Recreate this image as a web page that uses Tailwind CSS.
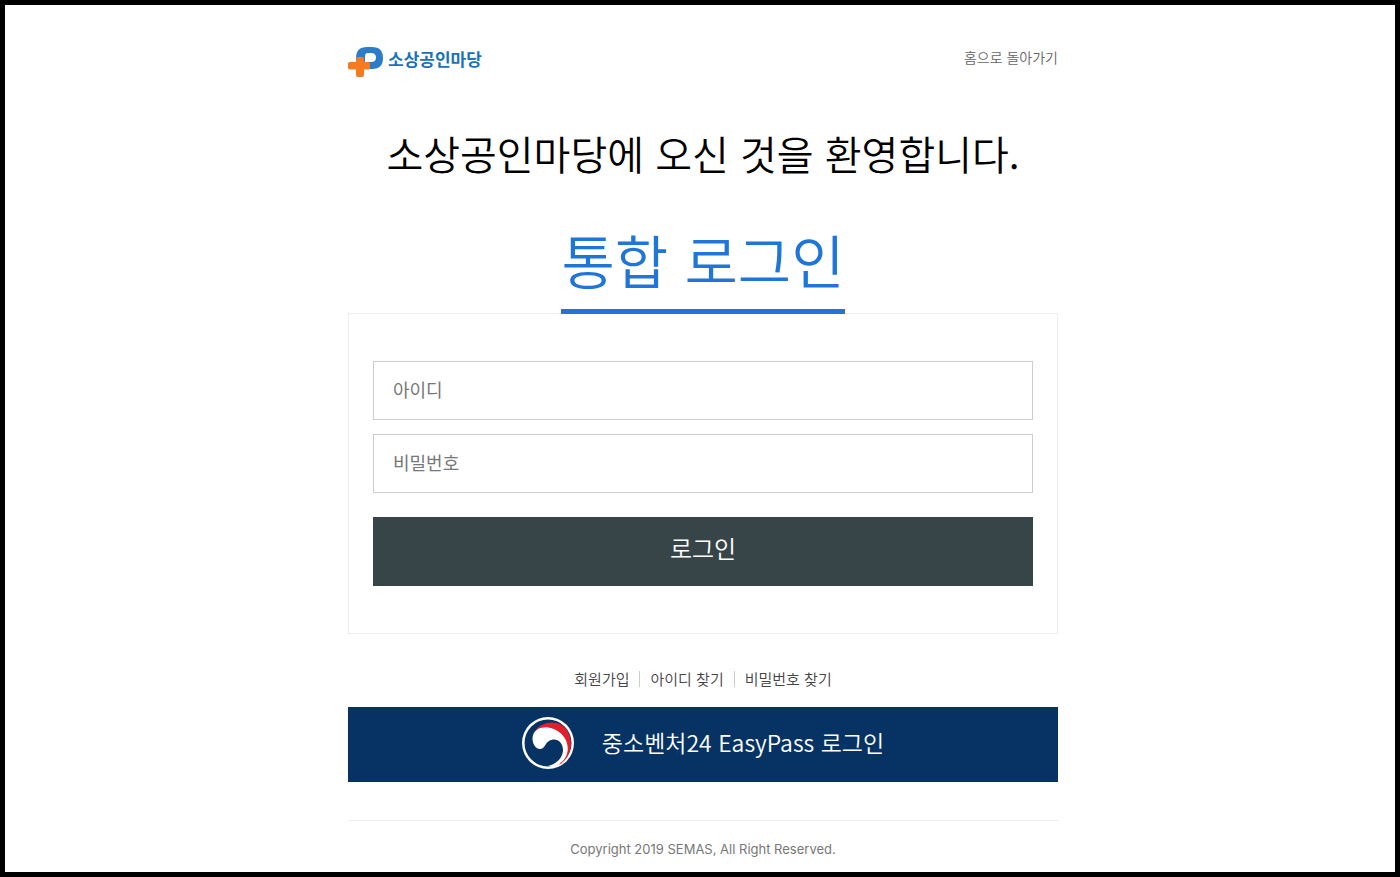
<!DOCTYPE html>
<html lang="ko">
<head>
<meta charset="utf-8">
<meta name="viewport" content="width=device-width, initial-scale=1">
<title>소상공인마당 통합 로그인</title>
<script src="https://cdn.jsdelivr.net/npm/@tailwindcss/browser@4"></script>
</head>
<body class="min-h-screen border-5 border-black bg-white pl-1.5 font-['Noto_Sans_CJK_KR',sans-serif]">
<div class="mx-auto max-w-[710px]">
  <header class="flex items-start justify-between pt-10">
    <a href="#" class="flex items-start gap-1 text-[17px] leading-5 font-bold text-[#1a72b8]">
      <svg class="mt-0.5 h-[30px] w-9" viewBox="0 0 36 30" aria-hidden="true">
        <path fill="#2d7cc9" fill-rule="evenodd" d="M8 14V11Q8 0 19 0H24Q35 0 35 11Q35 22 24 22H14V14ZM20 6Q17 6 17 9V15H23Q28 15 28 10.500T23 6Z"/>
        <path fill="#f47b20" d="M10 10H14.500Q16 10 16 11.500V15H20.500Q22 15 22 16.500V21Q22 22.500 20.500 22.500H16V28Q16 30 14 30H10Q8 30 8 28V22.500H2Q0 22.500 0 20.500V16.500Q0 15 2 15H8V11.500Q8 10 10 10Z"/>
      </svg>
      <span class="pt-1">소상공인마당</span>
    </a>
    <a href="#" class="pt-0.5 text-[14px] leading-5 font-[350] text-[#666]">홈으로 돌아가기</a>
  </header>
  <main>
    <h1 class="mt-[46px] text-center text-[40px] leading-[60px] font-[350] text-black">소상공인마당에 오신 것을 환영합니다.</h1>
    <div class="mt-8 flex justify-center">
      <h2 class="relative z-10 -mb-px border-b-5 border-[#1f76d8] pb-1.5 text-[58px] leading-[88px] font-[350] text-[#1f76d8]">통합 로그인</h2>
    </div>
    <form class="border border-[#ededed] px-6 pt-[47px] pb-[47px]">
      <input aria-label="아이디" type="text" placeholder="아이디" class="block h-[59px] w-full border border-[#ccc] px-[19px] pb-1 text-[18px] placeholder:text-[#777]">
      <input aria-label="비밀번호" type="password" placeholder="비밀번호" class="mt-3.5 block h-[59px] w-full border border-[#ccc] px-[19px] pb-1 text-[18px] placeholder:text-[#777]">
      <button type="button" class="mt-6 block h-[69px] w-full bg-[#374549] pb-2 text-[24px] font-[350] text-white">로그인</button>
    </form>
    <nav class="mt-[33px] flex items-center justify-center text-[15px] leading-6 font-[350] text-[#444]">
      <a href="#">회원가입</a>
      <span class="mx-2.5 h-4 w-px bg-[#ccc]"></span>
      <a href="#">아이디 찾기</a>
      <span class="mx-2.5 h-4 w-px bg-[#ccc]"></span>
      <a href="#">비밀번호 찾기</a>
    </nav>
    <a href="#" class="mt-4 flex h-[75px] items-center justify-center gap-7 bg-[#063363] pb-1 text-[23px] font-[350] text-white">
      <svg class="size-[52px]" viewBox="0 0 52 52" aria-hidden="true">
        <circle cx="26" cy="26" r="26" fill="#fff"/>
        <circle cx="26" cy="26" r="23.500" fill="#063363"/>
        <path fill="#e31f2b" d="M13 14C19 5 33 3 41 9C54 20 50 41 37 48C45 39 47 25 39 17C32 9 20 8 13 14Z"/>
        <path fill="#fff" d="M10.500 22C10.500 11 22 8 32 12C50 20 50 42 34 48.500C31 49.500 28 49.500 26 49C35 47 41 40 41 33C41 24 33 20 27 24C23 26 23 32 18 32C14 32 10.500 27 10.500 22Z"/>
      </svg>
      <span>중소벤처24 EasyPass 로그인</span>
    </a>
  </main>
  <footer class="mt-[38px] border-t border-[#ededed] pt-4 text-center font-['Inter','Noto_Sans_CJK_KR',sans-serif] text-[13px] leading-6 text-[#777]">Copyright 2019 SEMAS, All Right Reserved.</footer>
</div>
</body>
</html>
